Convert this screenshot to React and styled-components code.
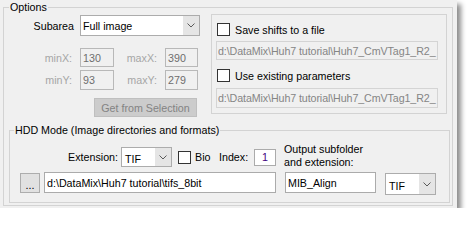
import React from 'react';
import styled, { createGlobalStyle } from 'styled-components';

const GlobalStyle = createGlobalStyle`
  body {
    margin: 0;
    background: #ffffff;
    font-family: "Liberation Sans", Arial, sans-serif;
    font-size: 10.7px;
    color: #000;
  }
`;

const Panel = styled.div`
  width: 457px;
  height: 208px;
  box-sizing: border-box;
  background: #f0f0f0;
  box-shadow: 4px 4px 5px rgba(0, 0, 0, 0.45);
  display: flex;
  flex-direction: column;
`;

const GroupBox = styled.fieldset`
  margin: ${(p) => p.$margin};
  padding: ${(p) => p.$padding};
  border: 1px solid #d3d3d3;
  min-width: 0;
  display: flex;
  flex-direction: column;
`;

const Legend = styled.legend`
  margin-left: ${(p) => p.$indent}px;
  padding: 0 1px;
  line-height: 13px;
  font-size: 10.7px;
`;

const TopRow = styled.div`
  display: flex;
  align-items: flex-start;
`;

const LeftCol = styled.div`
  width: 207px;
  display: flex;
  flex-direction: column;
`;

const SubareaRow = styled.div`
  display: flex;
  align-items: center;
  margin-top: 1px;
  gap: 6px;
`;

const Label = styled.span`
  flex: none;
  width: ${(p) => (p.$w ? `${p.$w}px` : 'auto')};
  text-align: ${(p) => p.$align || 'left'};
  color: ${(p) => (p.$muted ? '#a6a6a6' : '#000')};
  white-space: nowrap;
`;

const SelectBox = styled.div`
  flex: none;
  display: flex;
  width: ${(p) => p.$w}px;
  height: ${(p) => p.$h}px;
  margin: ${(p) => p.$margin || '0'};
  box-sizing: border-box;
  border: 1px solid #acacac;
  background: #fff;
`;

const SelectValue = styled.span`
  flex: 1;
  display: flex;
  align-items: center;
  padding: ${(p) => p.$pad || '0 0 0 2px'};
  white-space: nowrap;
`;

const SelectArrow = styled.span`
  width: 16px;
  background: #e5e5e5;
  display: flex;
  align-items: center;
  justify-content: center;
`;

const CoordGrid = styled.div`
  display: grid;
  grid-template-columns: 68px 34px 35px 33px;
  column-gap: 8px;
  align-items: center;
  margin-top: ${(p) => p.$top}px;
  height: ${(p) => p.$h}px;
`;

const CoordField = styled.input`
  box-sizing: border-box;
  width: 100%;
  height: 100%;
  margin: 0;
  padding: 0 2px;
  border: 1px solid #b8b8b8;
  background: #f0f0f0;
  color: #6d6d6d;
  font: inherit;
`;

const GetButton = styled.button`
  margin: 8px 0 0 90px;
  width: 103px;
  height: 19px;
  padding: 0;
  border: 1px solid #bfbfbf;
  background: #cccccc;
  color: #838383;
  font: inherit;
`;

const RightBox = styled.div`
  width: 236px;
  height: 100px;
  box-sizing: border-box;
  border: 1px solid #d3d3d3;
  padding: 8px 8px 0 4px;
  display: flex;
  flex-direction: column;
`;

const CheckRow = styled.label`
  display: flex;
  align-items: center;
  gap: 5px;
  height: 13px;
  margin: ${(p) => p.$margin || '0'};
`;

const CheckBox = styled.span`
  flex: none;
  width: 13px;
  height: 13px;
  box-sizing: border-box;
  border: 1px solid #333;
  background: #fff;
  margin-left: ${(p) => p.$left || 0}px;
`;

const TextField = styled.input`
  flex: none;
  box-sizing: border-box;
  width: ${(p) => p.$w}px;
  height: ${(p) => p.$h}px;
  margin: ${(p) => p.$margin || '0'};
  padding: ${(p) => (p.disabled ? '0 0 0 1px' : '0 2px')};
  border: 1px solid ${(p) => (p.disabled ? '#d4d4d4' : '#ababab')};
  background: ${(p) => (p.disabled ? '#f0f0f0' : '#ffffff')};
  color: ${(p) => (p.disabled ? '#858585' : p.$color || '#000')};
  text-align: ${(p) => p.$align || 'left'};
  font: inherit;
  letter-spacing: ${(p) => (p.disabled ? '-0.1px' : 'normal')};
  outline: none;
`;

const HddRow = styled.div`
  display: flex;
  align-items: ${(p) => p.$align || 'center'};
  height: ${(p) => p.$h}px;
  margin-top: ${(p) => p.$top || 0}px;
`;

const OutputLabel = styled.span`
  margin: 0 0 3px 8px;
  line-height: 13px;
  white-space: nowrap;
`;

const BrowseButton = styled.button`
  flex: none;
  margin: 1px 0 0 10px;
  width: 20px;
  height: 20px;
  padding: 4px 0 0;
  border: 1px solid #adadad;
  background: #e1e1e1;
  font: inherit;
  line-height: 11px;
`;

const Chevron = () => (
  <svg width="8" height="5" viewBox="0 0 8 5">
    <path d="M0.5 0.5 L4 4 L7.5 0.5" fill="none" stroke="#5a5a5a" strokeWidth="1" />
  </svg>
);

const Select = ({ value, w, h, margin, pad }) => (
  <SelectBox $w={w} $h={h} $margin={margin}>
    <SelectValue $pad={pad}>{value}</SelectValue>
    <SelectArrow>
      <Chevron />
    </SelectArrow>
  </SelectBox>
);

const App = () => {
  return (
    <>
      <GlobalStyle />
      <Panel>
        <GroupBox $margin="1px 4px 2px 3px" $padding="0 0 1px 0">
          <Legend $indent={5}>Options</Legend>
          <TopRow>
            <LeftCol>
              <SubareaRow>
                <Label $w={70} $align="right">Subarea</Label>
                <Select value="Full image" w={120} h={21} pad="1px 0 0 2px" />
              </SubareaRow>
              <CoordGrid $top={12} $h={19}>
                <Label $align="right" $muted>minX:</Label>
                <CoordField disabled defaultValue="130" />
                <Label $align="right" $muted>maxX:</Label>
                <CoordField disabled defaultValue="390" />
              </CoordGrid>
              <CoordGrid $top={3} $h={20}>
                <Label $align="right" $muted>minY:</Label>
                <CoordField disabled defaultValue="93" />
                <Label $align="right" $muted>maxY:</Label>
                <CoordField disabled defaultValue="279" />
              </CoordGrid>
              <GetButton disabled>Get from Selection</GetButton>
            </LeftCol>
            <RightBox>
              <CheckRow>
                <CheckBox $left={1} />
                Save shifts to a file
              </CheckRow>
              <TextField
                disabled
                $w={222}
                $h={19}
                $margin="5px 0 0 0"
                defaultValue="d:\DataMix\Huh7 tutorial\Huh7_CmVTag1_R2_"
              />
              <CheckRow $margin="9px 0 0 0">
                <CheckBox $left={1} />
                Use existing parameters
              </CheckRow>
              <TextField
                disabled
                $w={222}
                $h={20}
                $margin="6px 0 0 0"
                defaultValue="d:\DataMix\Huh7 tutorial\Huh7_CmVTag1_R2_"
              />
            </RightBox>
          </TopRow>
          <GroupBox $margin="7px 2px 1px 5px" $padding="10px 0 7px 0">
            <Legend $indent={4}>HDD Mode (Image directories and formats)</Legend>
            <HddRow $h={20}>
              <Label $w={108} $align="right">Extension:</Label>
              <Select value="TIF" w={51} h={20} margin="0 0 0 3px" pad="3px 0 0 3px" />
              <CheckBox $left={6} />
              <Label $w={24} style={{ marginLeft: 4 }}>Bio</Label>
              <Label $w={35}>Index:</Label>
              <TextField $w={22} $h={17} $align="center" $color="#400080" defaultValue="1" />
              <OutputLabel>
                Output subfolder
                <br />
                and extension:
              </OutputLabel>
            </HddRow>
            <HddRow $h={23} $top={5} $align="flex-start">
              <BrowseButton>...</BrowseButton>
              <TextField
                $w={232}
                $h={21}
                $margin="0 0 0 4px"
                defaultValue="d:\DataMix\Huh7 tutorial\tifs_8bit"
              />
              <TextField $w={91} $h={21} $margin="0 0 0 9px" defaultValue="MIB_Align" />
              <Select value="TIF" w={51} h={22} margin="1px 0 0 9px" pad="3px 0 0 3px" />
            </HddRow>
          </GroupBox>
        </GroupBox>
      </Panel>
    </>
  );
};

export default App;
